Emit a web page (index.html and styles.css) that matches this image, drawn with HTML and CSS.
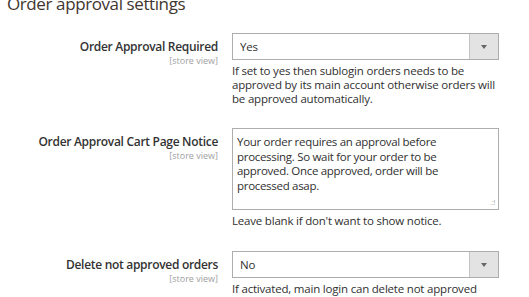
FILE: index.html
```html
<!DOCTYPE html>
<html lang="en">
<head>
  <meta charset="UTF-8">
  <title>Order approval settings</title>
  <link rel="stylesheet" href="styles.css">
</head>
<body>

  <div class="fieldset">
    <div class="legend">Order approval settings</div>

    <!-- Order Approval Required -->
    <div class="field">
      <div class="field-label">
        <span class="label-text">Order Approval Required</span>
        <span class="scope">[store view]</span>
      </div>
      <div class="field-control">
        <div class="select">
          <span class="select-value">Yes</span>
          <span class="select-btn"><span class="arrow"></span></span>
        </div>
        <div class="note">If set to yes then sublogin orders needs to be approved by its main account otherwise orders will be approved automatically.</div>
      </div>
    </div>

    <!-- Cart page notice -->
    <div class="field field-notice">
      <div class="field-label">
        <span class="label-text">Order Approval Cart Page Notice</span>
        <span class="scope">[store view]</span>
      </div>
      <div class="field-control">
        <div class="textarea">
          Your order requires an approval before processing. So wait for your order to be approved. Once approved, order will be processed asap.
          <span class="grip">.:!</span>
        </div>
        <div class="note">Leave blank if don't want to show notice.</div>
      </div>
    </div>

    <!-- Delete not approved -->
    <div class="field field-delete">
      <div class="field-label">
        <span class="label-text">Delete not approved orders</span>
        <span class="scope">[store view]</span>
      </div>
      <div class="field-control">
        <div class="select">
          <span class="select-value">No</span>
          <span class="select-btn"><span class="arrow"></span></span>
        </div>
        <div class="note">If activated, main login can delete not approved</div>
      </div>
    </div>
  </div>

</body>
</html>
```

FILE: styles.css
```css
body {
  margin: 0;
  background: #ffffff;
  font-family: 'Open Sans', sans-serif;
  color: #303030;
  overflow: hidden;
}

.fieldset {
  display: flex;
  flex-direction: column;
}

.legend {
  font-size: 17px;
  line-height: 20px;
  letter-spacing: -0.4px;
  color: #41362f;
  margin: -6px 0 19px 7px;
}

.field {
  display: grid;
  grid-template-columns: 218px 267px;
  column-gap: 14px;
  margin-bottom: 22px;
}

.field-delete {
  margin-bottom: 0;
  margin-top: 1px;
}

.field-label {
  display: flex;
  flex-direction: column;
  align-items: flex-end;
  text-align: right;
  padding-top: 6px;
}

.label-text {
  font-size: 12px;
  font-weight: 600;
  line-height: 16px;
  letter-spacing: -0.3px;
  color: #333333;
}

.scope {
  font-size: 9px;
  line-height: 10px;
  margin-top: 1px;
  color: #a0a0a0;
}

.field-control {
  display: flex;
  flex-direction: column;
}

.select {
  display: flex;
  height: 27px;
  border: 1px solid #adadad;
  box-sizing: border-box;
  background: #ffffff;
}

.select-value {
  flex: 1;
  font-size: 11.5px;
  letter-spacing: -0.2px;
  line-height: 25px;
  padding-left: 7px;
}

.select-btn {
  width: 28px;
  background: #e3e3e3;
  border-left: 1px solid #c4c4c4;
  display: flex;
  align-items: center;
  justify-content: center;
}

.arrow {
  width: 0;
  height: 0;
  border-left: 3px solid transparent;
  border-right: 3px solid transparent;
  border-top: 4px solid #666666;
}

.note {
  font-size: 11.5px;
  line-height: 14px;
  letter-spacing: -0.2px;
  margin-top: 4px;
  color: #303030;
}

.textarea {
  position: relative;
  height: 82px;
  box-sizing: border-box;
  border: 1px solid #adadad;
  padding: 6px 40px 6px 4px;
  font-size: 11.5px;
  line-height: 14.5px;
  letter-spacing: -0.3px;
}

.grip {
  position: absolute;
  right: 3px;
  bottom: 2px;
  font-size: 7px;
  line-height: 8px;
  color: #aaaaaa;
}
```
